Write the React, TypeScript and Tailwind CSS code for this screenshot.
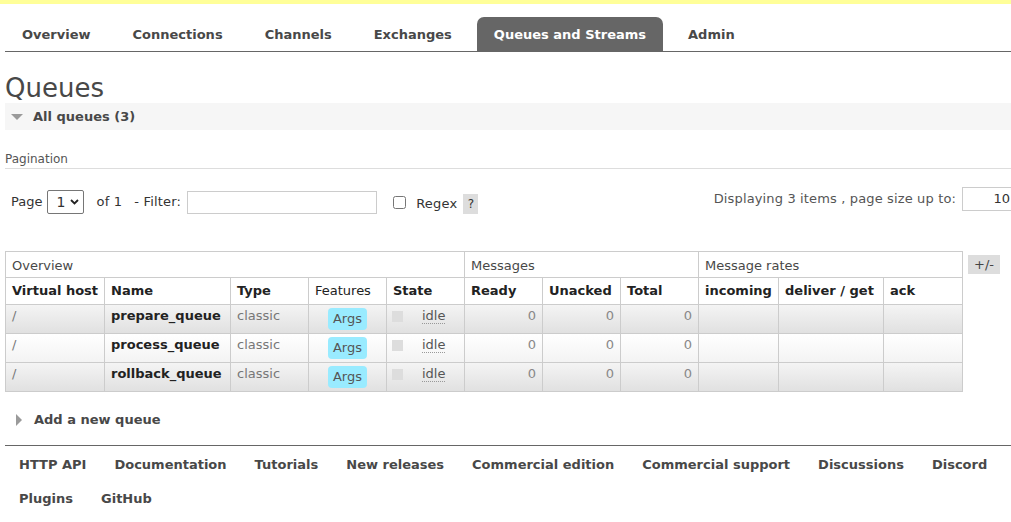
import React from 'react';

const tabs = ['Overview', 'Connections', 'Channels', 'Exchanges', 'Queues and Streams', 'Admin'];

const queues = [
  { name: 'prepare_queue', odd: true },
  { name: 'process_queue', odd: false },
  { name: 'rollback_queue', odd: true },
];

const footerLinks = [
  'HTTP API',
  'Documentation',
  'Tutorials',
  'New releases',
  'Commercial edition',
  'Commercial support',
  'Discussions',
  'Discord',
  'Plugins',
  'GitHub',
];

function DownTri() {
  return (
    <svg width="12" height="7" viewBox="0 0 12 7" className="shrink-0">
      <path d="M0 0 L12 0 L6 6 Z" fill="#9a9a9a" />
    </svg>
  );
}

function RightTri() {
  return (
    <svg width="7" height="12" viewBox="0 0 7 12" className="shrink-0">
      <path d="M0 0 L6 6 L0 12 Z" fill="#9a9a9a" />
    </svg>
  );
}

export default function App() {
  return (
    <div className="h-[522px] w-[1011px] overflow-hidden bg-white font-['DejaVu_Sans',Verdana,sans-serif] text-[12px] text-[#484848]">
      <div className="h-[4px] bg-[#ffff99]" />

      {/* main tabs */}
      <div className="ml-[5px] mt-[13px] flex h-[35px] border-b border-[#666]">
        {tabs.map((t) => {
          const active = t === 'Queues and Streams';
          return (
            <div
              key={t}
              className={
                active
                  ? 'mr-[8px] flex h-[34px] items-center rounded-t-[7px] bg-[#666] px-[17px] pt-[2px] text-[13px] font-bold text-white'
                  : 'mr-[8px] flex h-[34px] items-center px-[17px] pt-[2px] text-[13px] font-bold text-[#484848]'
              }
            >
              {t}
            </div>
          );
        })}
      </div>

      <div className="pl-[5px]">
        <h1 className="mt-[21px] h-[30px] text-[26px] leading-[30px] font-normal text-[#484848]">Queues</h1>

        <div className="flex h-[27px] items-center gap-[10px] bg-[#f6f6f6] pl-[6px] pt-[1px]">
          <DownTri />
          <span className="text-[13px] font-bold">All queues (3)</span>
        </div>

        <div className="mt-[21px] flex h-[18px] items-center border-b border-[#ddd] pb-[2px] text-[12px] text-[#555]">
          Pagination
        </div>

        {/* pagination row */}
        <div className="mt-[21px] flex h-[24px] items-center justify-between">
          <div className="flex items-center text-[13px] text-[#333]">
            <span className="ml-[6px]">Page</span>
            <div className="ml-[5px] flex h-[24px] w-[37px] items-center justify-between rounded-[2px] border border-[#767676] pr-[4px] pl-[8px]">
              <span className="text-[14px]">1</span>
              <svg width="9" height="6" viewBox="0 0 9 6">
                <path d="M1 1 L4.5 4.5 L8 1" stroke="#222" strokeWidth="1.8" fill="none" />
              </svg>
            </div>
            <span className="ml-[12px] tracking-[0.2px]">of 1</span>
            <span className="ml-[12px] tracking-[0.2px]">- Filter:</span>
            <div className="ml-[6px] h-[23px] w-[190px] border border-[#ccc] bg-white" />
            <input type="checkbox" className="ml-[16px] h-[13px] w-[13px]" />
            <span className="ml-[10px] mt-[4px] tracking-[0.2px]">Regex</span>
            <span className="ml-[6px] mt-[4px] flex h-[20px] w-[15px] items-center justify-center bg-[#ddd] text-[12px]">?</span>
          </div>
          <div className="flex items-center text-[13px] text-[#555]">
            <span className="mt-[-6px] tracking-[0.14px]">Displaying 3 items , page size up to:</span>
            <div className="ml-[6px] mr-[-12px] mt-[-6px] flex h-[24px] w-[61px] items-center justify-end border border-[#ccc] pr-[12px] text-[#333]">
              10
            </div>
          </div>
        </div>

        {/* queue table */}
        <div className="mt-[37px] flex items-start">
          <table className="w-[957px] table-fixed border-collapse whitespace-nowrap text-[13px]">
            <colgroup>
              <col className="w-[99px]" />
              <col className="w-[126px]" />
              <col className="w-[78px]" />
              <col className="w-[78px]" />
              <col className="w-[78px]" />
              <col className="w-[78px]" />
              <col className="w-[78px]" />
              <col className="w-[78px]" />
              <col className="w-[80px]" />
              <col className="w-[105px]" />
              <col className="w-[79px]" />
            </colgroup>
            <thead>
              <tr className="h-[26px]">
                <th colSpan={5} className="border border-[#ccc] px-[6px] pt-[2px] text-left font-normal text-[#484848]">Overview</th>
                <th colSpan={3} className="border border-[#ccc] px-[6px] pt-[2px] text-left font-normal text-[#484848]">Messages</th>
                <th colSpan={3} className="border border-[#ccc] px-[6px] pt-[2px] text-left font-normal text-[#484848]">Message rates</th>
              </tr>
              <tr className="h-[27px] text-left">
                <th className="border border-[#ccc] px-[6px] font-bold text-[#222]">Virtual host</th>
                <th className="border border-[#ccc] px-[6px] font-bold text-[#222]">Name</th>
                <th className="border border-[#ccc] px-[6px] font-bold text-[#222]">Type</th>
                <th className="border border-[#ccc] px-[6px] font-normal text-[#222]">Features</th>
                <th className="border border-[#ccc] px-[6px] font-bold text-[#222]">State</th>
                <th className="border border-[#ccc] px-[6px] font-bold text-[#222]">Ready</th>
                <th className="border border-[#ccc] px-[6px] font-bold text-[#222]">Unacked</th>
                <th className="border border-[#ccc] px-[6px] font-bold text-[#222]">Total</th>
                <th className="border border-[#ccc] px-[6px] font-bold text-[#222]">incoming</th>
                <th className="border border-[#ccc] px-[6px] font-bold text-[#222]">deliver / get</th>
                <th className="border border-[#ccc] px-[6px] font-bold text-[#222]">ack</th>
              </tr>
            </thead>
            <tbody>
              {queues.map((q) => (
                <tr
                  key={q.name}
                  className={
                    q.odd
                      ? 'h-[29px] bg-gradient-to-b from-[#f4f4f4] to-[#e0e0e0]'
                      : 'h-[29px] bg-gradient-to-b from-[#ffffff] to-[#f3f3f3]'
                  }
                >
                  <td className="border border-[#ccc] px-[6px] pb-[6px] text-[#777]">/</td>
                  <td className="border border-[#ccc] px-[6px] pb-[6px] font-bold text-[#222]">{q.name}</td>
                  <td className="border border-[#ccc] px-[6px] pb-[6px] text-[#777]">classic</td>
                  <td className="border border-[#ccc] px-[6px] text-center">
                    <span className="inline-block rounded-[4px] bg-[#99ebff] px-[5px] py-[1px] text-[#555]">Args</span>
                  </td>
                  <td className="border border-[#ccc] px-[6px] pb-[6px]">
                    <div className="flex items-center">
                      <span className="ml-[-1px] h-[11px] w-[11px] bg-[#ddd]" />
                      <span className="ml-[19px] border-b border-dotted border-[#999] leading-[15px] text-[#555]">idle</span>
                    </div>
                  </td>
                  <td className="border border-[#ccc] px-[6px] pb-[6px] text-right text-[#888]">0</td>
                  <td className="border border-[#ccc] px-[6px] pb-[6px] text-right text-[#888]">0</td>
                  <td className="border border-[#ccc] px-[6px] pb-[6px] text-right text-[#888]">0</td>
                  <td className="border border-[#ccc] px-[6px]" />
                  <td className="border border-[#ccc] px-[6px]" />
                  <td className="border border-[#ccc] px-[6px]" />
                </tr>
              ))}
            </tbody>
          </table>
          <div className="ml-[5px] mt-[4px] flex h-[19px] w-[32px] items-center justify-center bg-[#ddd] text-[13px] text-[#444]">
            +/-
          </div>
        </div>

        <div className="mt-[18px] flex h-[20px] items-center gap-[11px] pl-[11px]">
          <RightTri />
          <span className="text-[13px] font-bold">Add a new queue</span>
        </div>

        {/* footer */}
        <div className="mt-[15px] border-t border-[#666] pt-[2px]">
          <div className="flex w-[1000px] flex-wrap gap-x-[28px] pl-[14px] text-[13px] font-bold text-[#484848]">
            {footerLinks.map((l) => (
              <span key={l} className="h-[34px] leading-[34px]">
                {l}
              </span>
            ))}
          </div>
        </div>
      </div>
    </div>
  );
}
